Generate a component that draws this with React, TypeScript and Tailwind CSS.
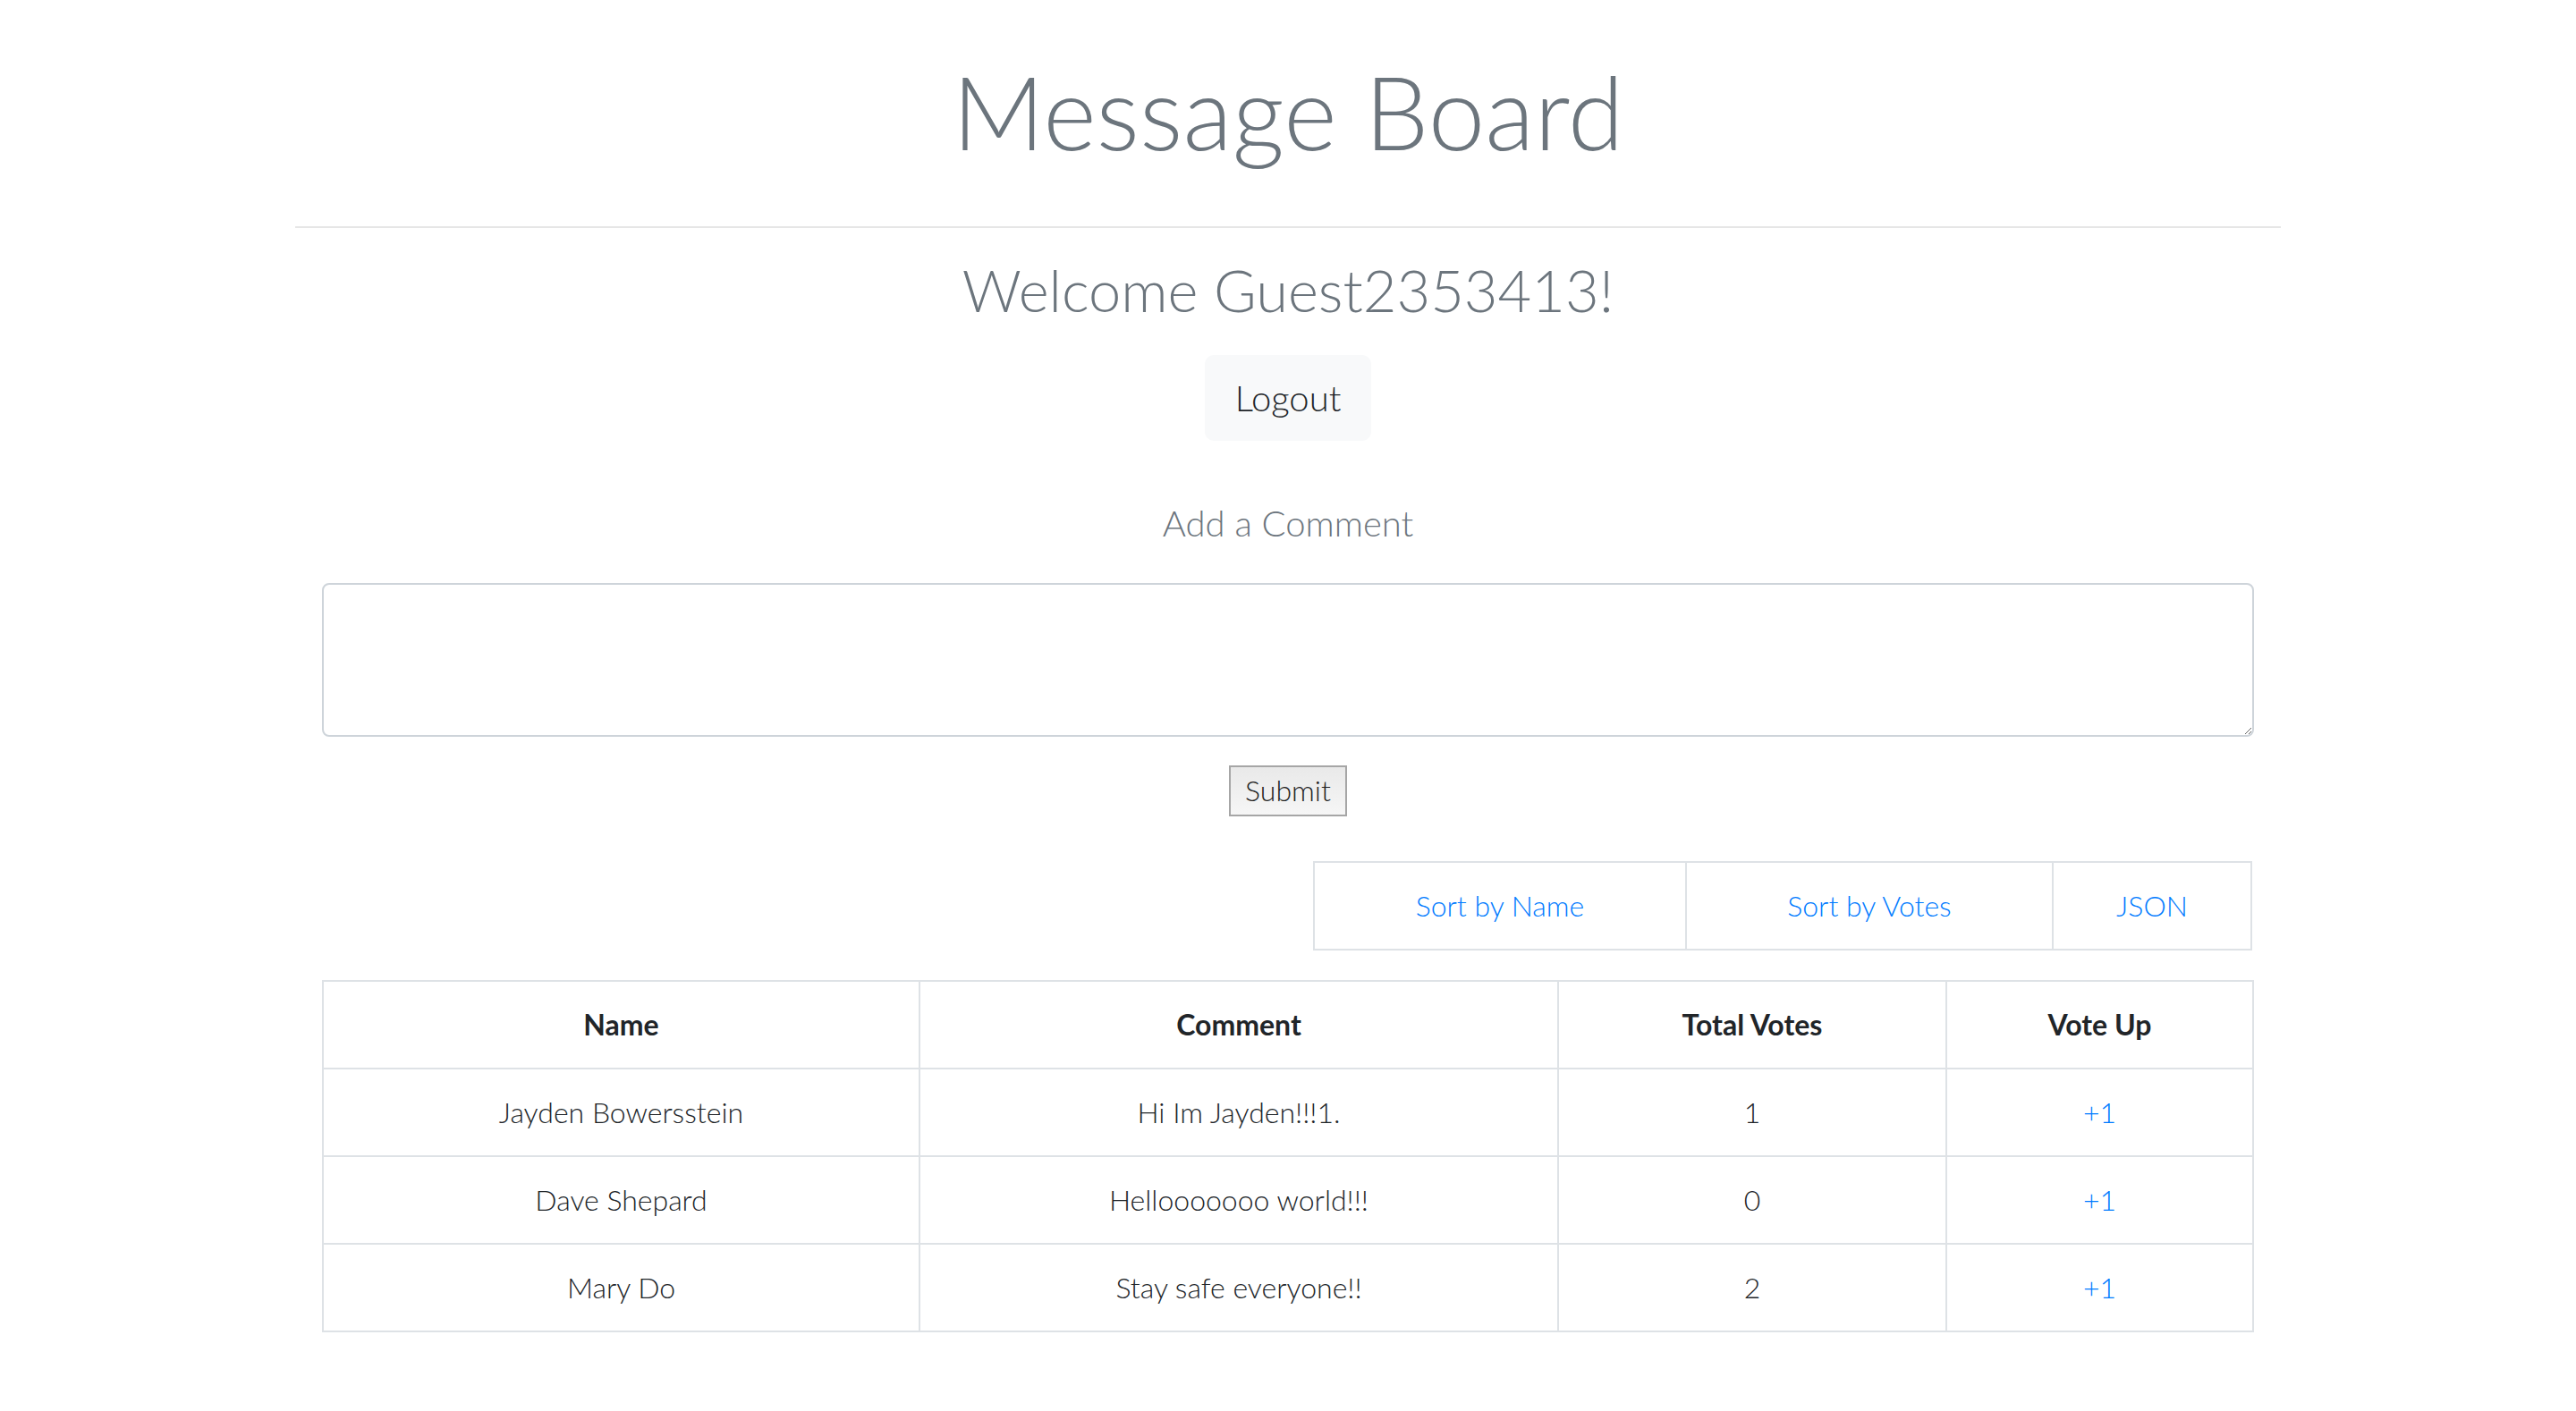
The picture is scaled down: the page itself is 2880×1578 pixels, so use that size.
import React from 'react';

const comments = [
  { id: 1, name: 'Jayden Bowersstein', comment: 'Hi Im Jayden!!!1.', votes: 1 },
  { id: 2, name: 'Dave Shepard', comment: 'Hellooooooo world!!!', votes: 0 },
  { id: 3, name: 'Mary Do', comment: 'Stay safe everyone!!', votes: 2 },
];

const cell = 'border-2 border-[#dee2e6] px-[24px] py-[24px] text-center text-[32px] leading-[48px]';

export default function App() {
  return (
    <div className="min-h-screen bg-white font-['Lato',sans-serif] text-[#212529]">
      <div className="mx-auto w-[2220px] pb-[80px]">
        <h1 className="pt-[56px] text-center text-[114px] leading-[1.2] font-light text-[#6c757d]">Message Board</h1>
        <hr className="mt-[60px] border-0 border-t-2 border-[#e6e6e6]" />

        <h2 className="mt-[30px] text-center text-[65px] leading-[1.2] font-light text-[#6c757d]">Welcome Guest2353413!</h2>
        <div className="mt-[34px] flex justify-center">
          <button className="rounded-[10px] border-2 border-[#f8f9fa] bg-[#f8f9fa] px-[32px] py-[16px] text-[40px] leading-[60px] font-light text-[#212529]">
            Logout
          </button>
        </div>

        {/* Add comment */}
        <h5 className="mt-[68px] text-center text-[40px] leading-[1.2] font-light text-[#6c757d]">Add a Comment</h5>
        <div className="mt-[43px] px-[30px]">
          <textarea className="block h-[172px] w-full rounded-[8px] border-2 border-[#ced4da] bg-white px-[24px] py-[12px] text-[32px] outline-none" />
        </div>
        <div className="mt-[32px] flex justify-center">
          <button className="h-[57px] border-2 border-[#a6a6a6] bg-gradient-to-b from-[#e9e9e9] to-[#f6f6f6] px-[16px] text-[32px] leading-[48px] font-light text-[#222]">
            Submit
          </button>
        </div>

        {/* Sort buttons */}
        <div className="mt-[50px] flex justify-end pr-[32px]">
          <table className="table-fixed border-collapse">
            <tbody>
              <tr>
                <td className={`${cell} w-[416px]`}><a href="#" className="font-light text-[#007bff]">Sort by Name</a></td>
                <td className={`${cell} w-[410px]`}><a href="#" className="font-light text-[#007bff]">Sort by Votes</a></td>
                <td className={`${cell} w-[222px]`}><a href="#" className="font-light text-[#007bff]">JSON</a></td>
              </tr>
            </tbody>
          </table>
        </div>

        {/* Comments */}
        <div className="mt-[33px] px-[30px]">
          <table className="w-full table-fixed border-collapse">
            <thead>
              <tr>
                <th className={`${cell} w-[667px] font-bold`}>Name</th>
                <th className={`${cell} w-[714px] font-bold`}>Comment</th>
                <th className={`${cell} w-[434px] font-bold`}>Total Votes</th>
                <th className={`${cell} font-bold`}>Vote Up</th>
              </tr>
            </thead>
            <tbody>
              {comments.map(c => (
                <tr key={c.id}>
                  <td className={`${cell} font-light`}>{c.name}</td>
                  <td className={`${cell} font-light`}>{c.comment}</td>
                  <td className={`${cell} font-light`}>{c.votes}</td>
                  <td className={`${cell} font-light`}><a href="#" className="text-[#007bff]">+1</a></td>
                </tr>
              ))}
            </tbody>
          </table>
        </div>
      </div>
    </div>
  );
}
